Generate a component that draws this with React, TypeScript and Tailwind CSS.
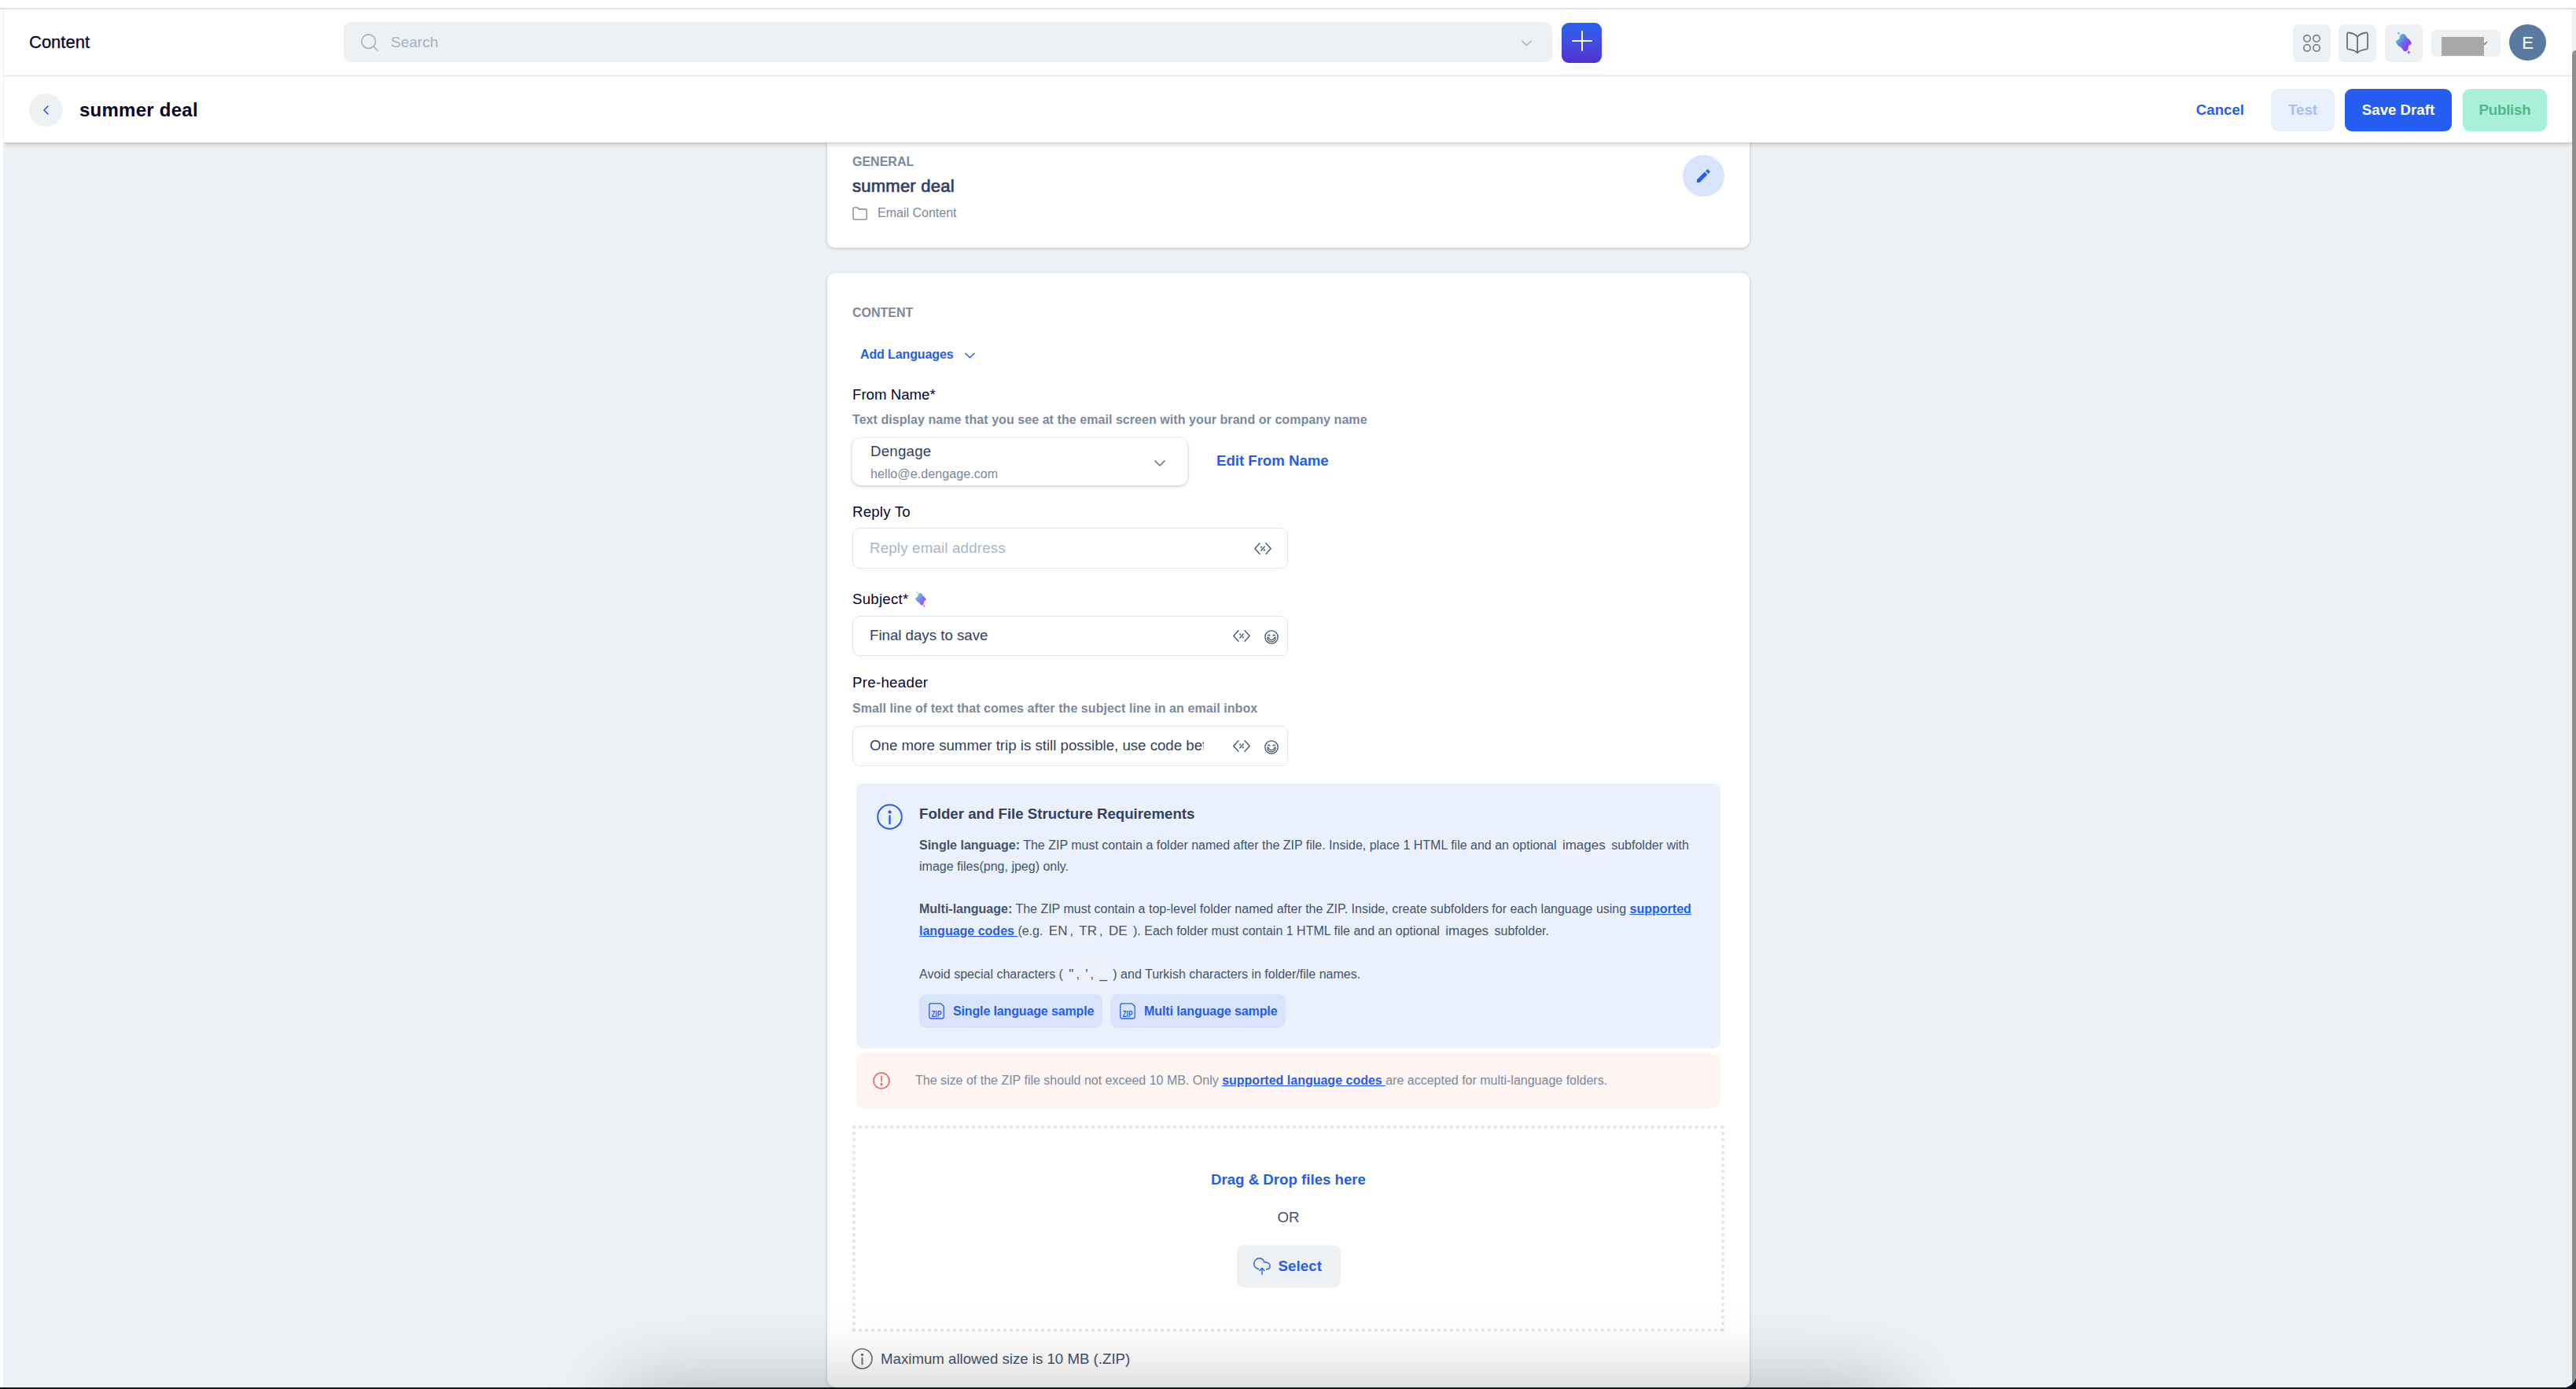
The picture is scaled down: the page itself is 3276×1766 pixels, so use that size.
import React from 'react';

interface IconProps {
  className?: string;
}

const Chevron: React.FC<IconProps> = ({ className }) => (
  <svg viewBox="0 0 14 8" fill="none" stroke="currentColor" strokeWidth="1.6" strokeLinecap="round" strokeLinejoin="round" className={className}>
    <path d="M1 1l6 6 6-6" />
  </svg>
);

const Sparkle: React.FC<IconProps & { id: string }> = ({ className, id }) => (
  <svg viewBox="0 0 20 29" className={className}>
    <defs>
      <linearGradient id={id} x1="1" y1="8" x2="18" y2="21" gradientUnits="userSpaceOnUse">
        <stop offset="0" stopColor="#55c8d8" />
        <stop offset="0.5" stopColor="#6a6ae6" />
        <stop offset="1" stopColor="#a62bf0" />
      </linearGradient>
    </defs>
    <path
      fill={`url(#${id})`}
      d="M7.2 3.4c1.6-.9 3.6-.2 5 1.4 1 1 1.1 1.9 1.6 2.7.7 1 2 1.3 3.2 2.8 1.7 2 3 3.7 2.7 5.2-.4 1.5-2.2 1.2-3.2 2.2-1 1-.6 2.2-.9 4.400-.4 2.6-2.7 3.7-4.7 2.9-2.3-.9-2.4-3-4.1-4.5-1.5-1.3-2.9-1.5-4.3-3.100-1.500-1.600-2.600-3.100-2.300-4.600.4-1.800 2.400-2 3.700-3 1.300-1 .5-1.700.8-3.300.3-1.500 1.100-2.400 2.500-3.100z"
    />
    <path fill="#68cbdc" d="M3.6 0l.8 1.5 1.6.7-1.6.8-.8 1.5-.8-1.5L1.300 2.200l1.500-.7z" />
    <path fill="#a93df0" d="M16.3 24l.8 1.7 1.700.8-1.700.8-.8 1.700-.8-1.700-1.700-.8 1.700-.8z" />
  </svg>
);

const CodeTag = () => (
  <svg viewBox="0 0 22 15" fill="none" stroke="#43536b" strokeWidth="1.3" strokeLinecap="round" strokeLinejoin="round" className="h-[15px] w-[22px]">
    <path d="M7 .8L.8 7.5 7 14.200M15 .8l6.200 6.700L15 14.200M13.200 5l-4.400 5" />
    <circle cx="9.200" cy="5.600" r=".45" />
    <circle cx="12.800" cy="9.400" r=".45" />
  </svg>
);

const Smile = () => (
  <svg viewBox="0 0 18 18" fill="none" stroke="#43536b" strokeWidth="1.3" strokeLinecap="round" strokeLinejoin="round" className="h-[18px] w-[18px]">
    <circle cx="9" cy="9" r="8.200" />
    <path d="M4.400 7.200c.5-1.500 2.100-1.500 2.600 0M11 7.200c.5-1.500 2.100-1.500 2.600 0" />
    <path d="M3.800 9.200c-.3 3.300 2 5.700 5.200 5.700s5.500-2.400 5.200-5.700c-1 0-1.600.2-1.700.9-.3 1.700-1.600 2.600-3.500 2.600s-3.200-.9-3.500-2.600c-.1-.7-.7-.9-1.700-.9z" strokeWidth="1.100" />
  </svg>
);

const InfoCircle: React.FC<IconProps> = ({ className }) => (
  <svg viewBox="0 0 33 33" fill="none" stroke="currentColor" strokeWidth="2" className={className}>
    <circle cx="16.5" cy="16.5" r="15.3" />
    <path d="M16.5 15.5v9.5" strokeWidth="2.4" strokeLinecap="round" />
    <circle cx="16.5" cy="10.4" r="2.1" fill="currentColor" stroke="none" />
  </svg>
);

const ZipIcon = () => (
  <svg viewBox="0 0 20 21" fill="none" stroke="#255df0" strokeWidth="1.3" className="h-[21px] w-5 shrink-0">
    <path d="M3 .8h12.200l4 3.400v13.600a2.200 2.200 0 0 1-2.200 2.200H3a2.200 2.200 0 0 1-2.200-2.200V3A2.200 2.200 0 0 1 3 .8z" strokeLinejoin="round" />
    <text x="10" y="17.6" textAnchor="middle" fontSize="11.5" fontWeight="700" fill="#255df0" stroke="none" textLength="13" lengthAdjust="spacingAndGlyphs">
      ZIP
    </text>
  </svg>
);

const Code: React.FC<{ children: React.ReactNode }> = ({ children }) => (
  <code className="rounded-md bg-[#eef0fa] px-[3px] py-[5px] font-['Liberation_Sans',sans-serif] text-[17px] leading-none">{children}</code>
);

interface InputProps {
  value: string;
  placeholder?: boolean;
  emoji?: boolean;
}

const InputBox: React.FC<InputProps> = ({ value, placeholder = false, emoji = false }) => (
  <div className={`flex w-[554px] items-center rounded-[9px] border border-[#dde6eb] pl-[21px] ${placeholder ? 'h-[52px] pr-5' : 'h-[51px] pr-[11px]'}`}>
    <div className={`mr-auto w-[425px] overflow-hidden whitespace-nowrap text-[18.67px] leading-7 ${placeholder ? 'tracking-[0.2px] text-[#a9b6c6]' : 'pb-0.5 text-[#33415c]'}`}>
      {value}
    </div>
    <CodeTag />
    {emoji && (
      <div className="ml-[18px] pt-0.5">
        <Smile />
      </div>
    )}
  </div>
);

const Header = () => (
  <header className="flex h-[85px] shrink-0 items-start border-b border-[#e9eff3] pt-4">
    <div className="w-[432px] pl-8 pt-3 text-[22px] leading-7 text-[#05052b] [-webkit-text-stroke:0.3px]">Content</div>
    <div className="flex h-[51px] w-[1537px] items-center rounded-[9px] bg-[#edf1f4] pl-[22px] pr-[26px] text-[#a4b1c1]">
      <svg viewBox="0 0 22 22" fill="none" stroke="currentColor" strokeWidth="1.6" strokeLinecap="round" className="h-[22px] w-[22px]">
        <circle cx="9.7" cy="9.7" r="8.8" />
        <path d="M16 16l5.2 5.2" />
      </svg>
      <span className="ml-4 pt-0.5 text-[19px]">Search</span>
      <Chevron className="ml-auto mt-[3px] h-[8px] w-[13px]" />
    </div>
    <div className="ml-3 mt-px flex h-[51px] w-[51px] items-start justify-center rounded-[9px] bg-gradient-to-b from-[#2563f0] to-[#4f30cf] pt-[10px] shadow-[0_4px_24px_rgba(0,0,0,0.05)]">
      <svg viewBox="0 0 26 26" stroke="#fff" strokeWidth="2" strokeLinecap="round" className="h-[26px] w-[26px]">
        <path d="M13 1v24M1 13h24" />
      </svg>
    </div>
    <div className="ml-auto mr-[33px] mt-[3px] flex items-start">
      <div className="flex h-12 w-12 items-center justify-center rounded-[7px] bg-[#edf1f4]">
        <svg viewBox="0 0 22 22" fill="none" stroke="#737373" strokeWidth="1.5" className="h-[22px] w-[22px]">
          <circle cx="5" cy="5" r="4.2" />
          <circle cx="17" cy="5" r="4.2" />
          <circle cx="5" cy="17" r="4.2" />
          <circle cx="17" cy="17" r="4.2" />
        </svg>
      </div>
      <div className="ml-[10px] flex h-12 w-12 items-start justify-center rounded-[7px] bg-[#edf1f4] pt-[9px]">
        <svg viewBox="0 0 28 28" fill="none" stroke="#6f6f6f" strokeWidth="1.8" strokeLinejoin="round" className="h-7 w-7">
          <path d="M14 6.800C11.500 3.500 7 2 3.200 1.500 1.800 1.300 1 2 1 3.300v17.400c0 1 .6 1.700 1.700 1.900C7 23.200 11.500 24.500 14 27.200c2.500-2.700 7-4 11.300-4.600 1.100-.2 1.700-.9 1.700-1.900V3.300c0-1.300-.8-2-2.200-1.800C21 2 16.500 3.500 14 6.800zM14 6.800v20.400" />
        </svg>
      </div>
      <div className="ml-[11px] flex h-12 w-12 items-start justify-center rounded-[7px] bg-[#edf1f4] pt-[9px]">
        <Sparkle id="ai-header" className="h-[29px] w-5" />
      </div>
      <div className="ml-[11px] mt-[7px] flex h-[34px] w-[88px] items-start rounded-[6px] bg-[#edf1f4] pl-[13px] pt-[9px]">
        <div className="h-6 w-[54px] bg-[#a8a8a8]" />
        <svg viewBox="0 0 5 6" stroke="#6b7280" strokeWidth="1.5" className="mt-[5px] h-[6px] w-[5px]">
          <path d="M0 5l4-4" />
        </svg>
      </div>
      <div className="ml-[11px] flex h-[46px] w-[47px] items-center justify-center rounded-full bg-[#5b7a9f] text-[22px] text-white">E</div>
    </div>
  </header>
);

const TitleBar = () => (
  <div className="z-10 flex h-[84px] shrink-0 items-start bg-white pt-4 shadow-[0_2px_6px_rgba(0,0,0,0.22)]">
    <div className="ml-8 mt-[6px] flex h-[42px] w-[43px] items-center justify-center rounded-full bg-[#edf1f4]">
      <svg viewBox="0 0 7 12" fill="none" stroke="#255df0" strokeWidth="1.6" strokeLinecap="round" strokeLinejoin="round" className="h-3 w-[7px]">
        <path d="M6 1L1 6l5 5" />
      </svg>
    </div>
    <h1 className="ml-[21px] mt-[11px] text-[24px] font-bold leading-8 tracking-[0.25px] text-[#05052b]">summer deal</h1>
    <div className="ml-auto mr-8 flex h-[54px] items-center text-[18.67px] font-bold">
      <span className="mr-[34px] text-[#255df0]">Cancel</span>
      <button className="h-[54px] w-[81px] rounded-[9px] bg-[#eaf1fd] text-[#a5bdfa]">Test</button>
      <button className="ml-[13px] h-[54px] w-[136px] rounded-[9px] bg-[#255df0] text-white">Save Draft</button>
      <button className="ml-[14px] h-[54px] w-[107px] rounded-[9px] bg-[#a8f0d8] tracking-[-0.2px] text-[#56b78e]">Publish</button>
    </div>
  </div>
);

const GeneralCard = () => (
  <section className="flex h-[134px] w-[1173px] shrink-0 rounded-b-[10px] bg-white pl-8 pr-8 shadow-[0_1px_4px_rgba(0,0,0,0.2)]">
    <div className="pt-[13px]">
      <div className="text-base font-bold leading-6 text-[#7b899d]">GENERAL</div>
      <div className="mt-0.5 text-[22px] leading-[34px] tracking-[0.25px] text-[#33415c] [-webkit-text-stroke:0.7px]">summer deal</div>
      <div className="mt-[5px] flex items-center text-base leading-6 text-[#7b899d]">
        <svg viewBox="0 0 19 17" fill="none" stroke="#7d7d7d" strokeWidth="1.3" strokeLinejoin="round" className="h-[17px] w-[19px]">
          <path d="M1 2.200C1 1.300 1.500.8 2.300.8h4l2 2.200h8.500c.9 0 1.400.5 1.400 1.400v10.300c0 .9-.5 1.400-1.400 1.400H2.400c-.9 0-1.400-.5-1.400-1.400z" />
        </svg>
        <span className="ml-[13px]">Email Content</span>
      </div>
    </div>
    <div className="ml-auto mt-4 flex h-[53px] w-[53px] items-center justify-center rounded-full bg-[#d9e3fc] pr-px">
      <svg viewBox="0 0 18 18" fill="#255df0" className="h-[17px] w-[17px]">
        <path d="M0 14.300V18h3.700L14.200 7.500l-3.700-3.700zM17.400 4.300a1 1 0 0 0 0-1.400L15.100.6a1 1 0 0 0-1.400 0l-2 2 3.700 3.700z" />
      </svg>
    </div>
  </section>
);

const Requirements = () => (
  <div className="ml-[5px] mt-[22px] flex h-[337px] w-[1099px] shrink-0 rounded-[9px] bg-[#eaf1fd] pl-[26px] pt-[25px] text-[#43536b]">
    <InfoCircle className="mt-px h-[33px] w-[33px] shrink-0 text-[#255df0]" />
    <div className="ml-[21px] whitespace-nowrap">
      <h2 className="text-[18.67px] font-bold leading-7 text-[#33415c]">Folder and File Structure Requirements</h2>
      <p className="mt-3 h-[54px] text-base leading-[27px]">
        <b>Single language:</b> The ZIP must contain a folder named after the ZIP file. Inside, place 1 HTML file and an optional <Code>images</Code> subfolder with
        <br />
        image files(png, jpeg) only.
      </p>
      <p className="mt-[27px] h-[55px] text-base leading-[27.5px]">
        <b>Multi-language:</b> The ZIP must contain a top-level folder named after the ZIP. Inside, create subfolders for each language using{' '}
        <a className="font-bold text-[#255df0] underline">supported</a>
        <br />
        <a className="whitespace-pre font-bold text-[#255df0] underline">language codes </a>(e.g. <Code>EN</Code>, <Code>TR</Code>, <Code>DE</Code> ). Each folder must contain 1 HTML file and an optional <Code>images</Code> subfolder.
      </p>
      <p className="mt-7 h-[27px] text-base leading-[27px]">
        Avoid special characters ( <Code>"</Code>, <Code>'</Code>, <Code>_</Code> ) and Turkish characters in folder/file names.
      </p>
      <div className="mt-3 flex gap-[10px] text-base font-bold text-[#255df0]">
        <button className="flex h-[43px] w-[233px] items-center rounded-[9px] bg-[#d9e3fc] pl-3">
          <ZipIcon />
          <span className="ml-[11px] tracking-[-0.14px]">Single language sample</span>
        </button>
        <button className="flex h-[43px] w-[223px] items-center rounded-[9px] bg-[#d9e3fc] pl-3">
          <ZipIcon />
          <span className="ml-[11px] tracking-[-0.1px]">Multi language sample</span>
        </button>
      </div>
    </div>
  </div>
);

const SizeWarning = () => (
  <div className="ml-[5px] mt-[6px] flex h-[70px] w-[1099px] shrink-0 items-center rounded-[9px] bg-[#fef5f3] pl-[21px] text-base text-[#7b899d]">
    <svg viewBox="0 0 22 22" fill="none" stroke="#ec5b56" strokeWidth="1.5" strokeLinecap="round" className="h-[22px] w-[22px]">
      <circle cx="11" cy="11" r="10" />
      <path d="M11 5.5v6.500" />
      <circle cx="11" cy="15.6" r=".8" fill="#ec5b56" />
    </svg>
    <span className="ml-8 whitespace-pre">
      The size of the ZIP file should not exceed 10 MB. Only <a className="font-bold text-[#255df0] underline">supported language codes </a>are accepted for multi-language folders.
    </span>
  </div>
);

const DropZone = () => (
  <div className="mt-[22px] flex h-[262px] w-[1109px] shrink-0 flex-col items-center border-4 border-dotted border-[#dde6eb] pt-[51px] text-[18.67px] leading-7">
    <div className="font-bold text-[#255df0]">Drag &amp; Drop files here</div>
    <div className="mt-5 text-[#43536b]">OR</div>
    <button className="mt-[21px] flex h-[54px] w-[132px] items-center rounded-[9px] bg-[#edf1f4] pl-[21px] font-bold text-[#255df0]">
      <svg viewBox="0 0 22 22" fill="none" stroke="currentColor" strokeWidth="1.4" strokeLinecap="round" strokeLinejoin="round" className="h-[22px] w-[22px]">
        <path d="M6.5 14.500C3 13.500.8 11 .8 7.800.8 4 3.800.8 7.600.8c3.200 0 5.500 2.200 6.300 5.100 4-.6 7.200 1.500 7.200 4.600 0 2.400-1.800 4.300-4.600 4.300M11 21.200V13.500M8 16.500l3-3.200 3 3.200" />
      </svg>
      <span className="ml-[10px] tracking-[0.1px]">Select</span>
    </button>
  </div>
);

const ContentCard = () => (
  <section className="mt-8 flex h-[1417px] w-[1173px] shrink-0 flex-col rounded-[10px] bg-white pl-8 pt-[39px] shadow-[0_1px_4px_rgba(0,0,0,0.2)]">
    <div className="text-base font-bold leading-6 text-[#7b899d]">CONTENT</div>
    <div className="mt-[29px] flex items-center pl-[10px] text-base font-bold leading-6 tracking-[-0.12px] text-[#255df0]">
      Add Languages
      <Chevron className="ml-[15px] mt-px h-[8px] w-[13px]" />
    </div>

    <label className="mt-[25px] text-[18.67px] leading-7 text-[#05052b]">From Name*</label>
    <p className="mt-[6px] text-base font-bold leading-6 tracking-[0.06px] text-[#7b899d]">
      Text display name that you see at the email screen with your brand or company name
    </p>
    <div className="mt-[11px] flex h-[60px]">
      <div className="flex h-[60px] w-[426px] items-center rounded-[10px] bg-white pl-[23px] pr-7 shadow-[0_1px_4px_rgba(0,0,0,0.25)]">
        <div className="h-[60px] pt-[3px]">
          <div className="text-[18.67px] leading-7 tracking-[0.25px] text-[#33415c]">Dengage</div>
          <div className="text-base leading-[30px] tracking-[0.1px] text-[#7b899d]">hello@e.dengage.com</div>
        </div>
        <Chevron className="ml-auto mt-1 h-[8px] w-[14px] text-[#6f6f6f]" />
      </div>
      <a className="ml-[37px] mt-[15px] text-[18.67px] font-bold leading-7 tracking-[-0.03px] text-[#255df0]">Edit From Name</a>
    </div>

    <label className="mb-[6px] mt-5 text-[18.67px] leading-7 tracking-[0.2px] text-[#05052b]">Reply To</label>
    <InputBox value="Reply email address" placeholder />

    <label className="mb-[7px] mt-[25px] flex items-center text-[18.67px] leading-7 tracking-[0.25px] text-[#05052b]">
      Subject*
      <Sparkle id="ai-subject" className="ml-2 h-5 w-[14px] opacity-85" />
    </label>
    <InputBox value="Final days to save" emoji />

    <label className="mt-5 text-[18.67px] leading-7 tracking-[0.3px] text-[#05052b]">Pre-header</label>
    <p className="mb-[10px] mt-[7px] text-base font-bold leading-6 tracking-[0.07px] text-[#7b899d]">
      Small line of text that comes after the subject line in an email inbox
    </p>
    <InputBox value="One more summer trip is still possible, use code before" emoji />

    <Requirements />
    <SizeWarning />
    <DropZone />
    <div className="mt-[21px] flex h-[27px] items-center text-[18.67px] leading-7 text-[#43536b]">
      <InfoCircle className="-ml-px h-[27px] w-[27px] text-[#6f6f6f]" />
      <span className="ml-[10px]">Maximum allowed size is 10 MB (.ZIP)</span>
    </div>
  </section>
);

const App = () => (
  <div className="relative flex h-[1766px] w-[3276px] flex-col overflow-hidden bg-[#0f1423] font-['Liberation_Sans',Arial,sans-serif]">
    <div className="h-3 shrink-0 border-b-2 border-[#e2e2e2] bg-white" />
    <div className="flex h-[1752px] shrink-0 overflow-hidden rounded-br-[16px] bg-white">
      <div className="w-[5px] shrink-0 border-r border-[#e9eff3]" />
      <main className="flex h-full w-[3266px] flex-col overflow-hidden">
        <Header />
        <TitleBar />
        <div className="flex flex-1 flex-col bg-[#edf1f4] pl-[1047px]">
          <GeneralCard />
          <ContentCard />
        </div>
      </main>
      <div className="w-[5px] shrink-0 bg-[#edf1f4] pt-[52px]">
        <div className="h-full rounded-tl-[5px] bg-[#8f8f8f]" />
      </div>
    </div>
    <div className="h-0.5 shrink-0 bg-[#0f1423]" />
    {/* soft shadow rising from below the window */}
    <div className="pointer-events-none absolute left-[790px] top-[1764px] h-[100px] w-[1625px] bg-[#0f1423] shadow-[0_0_100px_rgba(0,0,0,0.25)]" />
  </div>
);

export default App;
